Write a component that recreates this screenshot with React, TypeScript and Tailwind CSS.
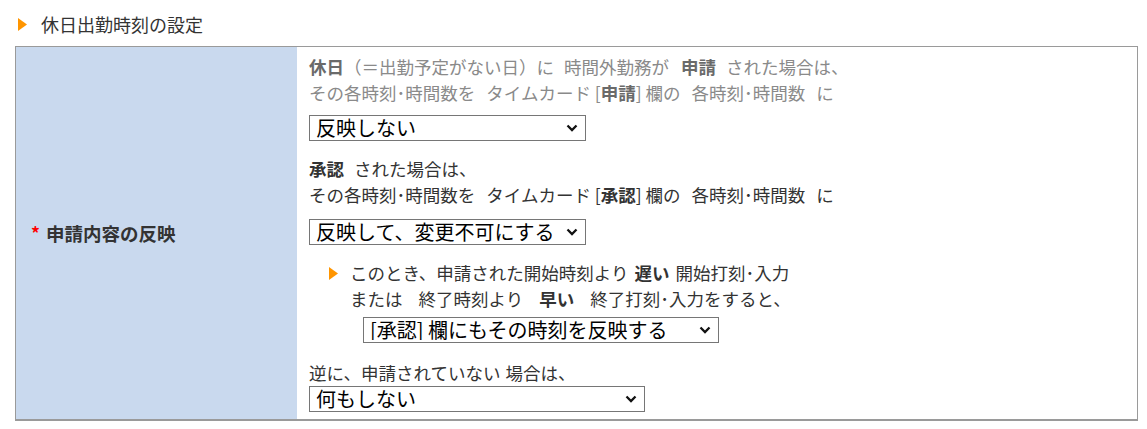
import React from "react";

const font = { fontFamily: '"Noto Sans CJK JP", "Noto Sans", sans-serif' };

const Arrow = ({ className = "" }: { className?: string }) => (
  <svg width="9" height="13" viewBox="0 0 9 13" className={className}>
    <path d="M0 0L9 6.5L0 13Z" fill="#ff9500" />
  </svg>
);

const Gap = ({ w = "w-[10px]" }: { w?: string }) => <span className={`inline-block ${w}`} />;

const Dropdown = ({
  value,
  options,
  className = "",
}: {
  value: string;
  options: string[];
  className?: string;
}) => (
  <div className={`relative h-[26px] ${className}`}>
    <select
      defaultValue={value}
      className="h-full w-full appearance-none rounded-none border border-[#767676] bg-white pl-[6px] pr-8 text-[20px] leading-none text-black outline-none"
      style={font}
    >
      {options.map((o) => (
        <option key={o}>{o}</option>
      ))}
    </select>
    <svg
      width="12"
      height="8"
      viewBox="0 0 12 8"
      className="pointer-events-none absolute right-[8px] top-1/2 -translate-y-1/2"
    >
      <path d="M1.5 1.5L6 6L10.5 1.5" fill="none" stroke="#111" strokeWidth="2.3" />
    </svg>
  </div>
);

export default function App() {
  return (
    <div className="h-[429px] w-[1147px] bg-white text-[17.5px] leading-[26px] text-[#333]" style={font}>
      {/* section title */}
      <div className="flex h-[46px] items-center gap-[14px] pt-[2px] pl-[18px]">
        <Arrow />
        <span className="text-[18px] text-[#333]">休日出勤時刻の設定</span>
      </div>

      <div className="ml-[15px] flex w-[1123px] border-t border-r border-l border-b-2 border-[#9a9a9a]">
        <div className="flex w-[281px] shrink-0 items-center bg-[#c9d9ee] pl-[15px]">
          <span className="mr-[6px] font-bold text-[#ff0000]">*</span>
          <span className="text-[18.5px] font-bold text-[#333]">申請内容の反映</span>
        </div>

        <div className="flex-1 pt-[7px] pb-[7px] pl-[12px]">
          {/* 申請 */}
          <div className="text-[#8a8a8a]">
            <div>
              <b className="text-[#6a6a6a]">休日</b>（＝出勤予定がない日）に<Gap />時間外勤務が<Gap w="w-[12px]" />
              <b className="text-[#6a6a6a]">申請</b>
              <Gap />された場合は、
            </div>
            <div>
              その各時刻･時間数を<Gap w="w-[11px]" />タイムカード [<b className="text-[#6a6a6a]">申請</b>] 欄の
              <Gap w="w-[11px]" />各時刻･時間数<Gap w="w-[11px]" />に
            </div>
          </div>
          <Dropdown
            className="mt-[9px] w-[277px]"
            value="反映しない"
            options={["反映しない", "反映する", "反映して、変更不可にする"]}
          />

          {/* 承認 */}
          <div className="mt-[15px]">
            <div>
              <b>承認</b>
              <Gap />された場合は、
            </div>
            <div>
              その各時刻･時間数を<Gap w="w-[11px]" />タイムカード [<b>承認</b>] 欄の<Gap w="w-[11px]" />各時刻･時間数
              <Gap w="w-[11px]" />に
            </div>
          </div>
          <Dropdown
            className="mt-[11px] w-[277px]"
            value="反映して、変更不可にする"
            options={["反映しない", "反映する", "反映して、変更不可にする"]}
          />

          {/* このとき */}
          <div className="mt-[15px] flex pl-[20px]">
            <div className="flex h-[26px] w-[21px] shrink-0 items-center">
              <Arrow className="mt-[1px]" />
            </div>
            <div>
              <div>
                このとき、申請された開始時刻より<Gap w="w-[6px]" />
                <b>遅い</b>
                <Gap w="w-[6px]" />開始打刻･入力
              </div>
              <div>
                または<Gap w="w-[16px]" />終了時刻より<Gap w="w-[16px]" />
                <b>早い</b>
                <Gap w="w-[16px]" />終了打刻･入力をすると、
              </div>
              <Dropdown
                className="ml-[13px] mt-[5px] w-[356px]"
                value="[承認] 欄にもその時刻を反映する"
                options={["[承認] 欄にもその時刻を反映する", "何もしない"]}
              />
            </div>
          </div>

          {/* 申請なし */}
          <div className="mt-[17px]">
            逆に、申請されていない<Gap w="w-[5px]" />場合は、
          </div>
          <Dropdown
            className="w-[336px]"
            value="何もしない"
            options={["何もしない", "警告する"]}
          />
        </div>
      </div>
    </div>
  );
}
